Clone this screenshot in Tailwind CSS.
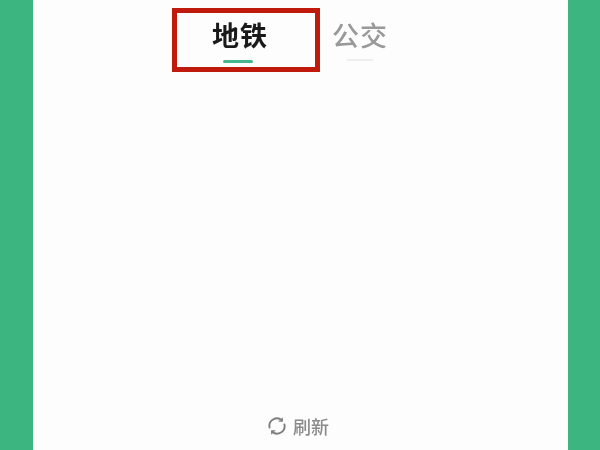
<!DOCTYPE html>
<html lang="zh">
<head>
    <meta charset="UTF-8">
    <title>地铁</title>
    <script src="https://cdn.jsdelivr.net/npm/@tailwindcss/browser@4"></script>
</head>
<body class="w-[600px] h-[450px] overflow-hidden bg-[#3cb580] font-['Noto_Sans_CJK_SC',sans-serif]">
    <div class="relative ml-[33px] w-[535px] h-[450px] bg-[#fdfdfd] flex flex-col">
        <!-- tabs -->
        <div class="flex pt-[8px] pl-[139px] h-[72px]">
            <div class="w-[148px] h-[64px] border-[5px] border-[#bf1a0c] flex flex-col">
                <span class="ml-[35px] mt-[4px] text-[27px] leading-[36px] font-bold text-[#1a1a1a] tracking-[1px] whitespace-nowrap blur-[0.4px]">地铁</span>
                <span class="ml-[46px] mt-[7px] w-[30px] h-[3px] rounded-full bg-[#45b78c] blur-[0.4px]"></span>
            </div>
            <div class="ml-[12px] flex flex-col items-center w-[56px]">
                <span class="mt-[9px] text-[27px] leading-[36px] font-medium text-[#999999] tracking-[1px] whitespace-nowrap blur-[0.5px]">公交</span>
                <span class="mt-[6px] w-[26px] h-[2px] bg-[#eeeeee] blur-[0.4px]"></span>
            </div>
        </div>
        <!-- refresh -->
        <div class="mt-auto h-[46px] pb-[2px] pr-[5px] flex items-center justify-center gap-[6px] text-[#8a8a8a]">
            <svg class="w-[20px] h-[20px] blur-[0.4px]" viewBox="0 0 20 20" fill="none" stroke="#7d7d7d" stroke-width="1.9" stroke-linecap="round">
                <path d="M2.6 11.5A7.5 7.5 0 0 1 14.8 4.2"/>
                <path d="M17.4 8.5A7.5 7.5 0 0 1 5.2 15.8"/>
                <path d="M15.2 2.2v3h-3" stroke-width="1.3"/>
                <path d="M4.8 17.8v-3h3" stroke-width="1.3"/>
            </svg>
            <span class="text-[18px] leading-[24px] font-medium blur-[0.4px]">刷新</span>
        </div>
    </div>
</body>
</html>
